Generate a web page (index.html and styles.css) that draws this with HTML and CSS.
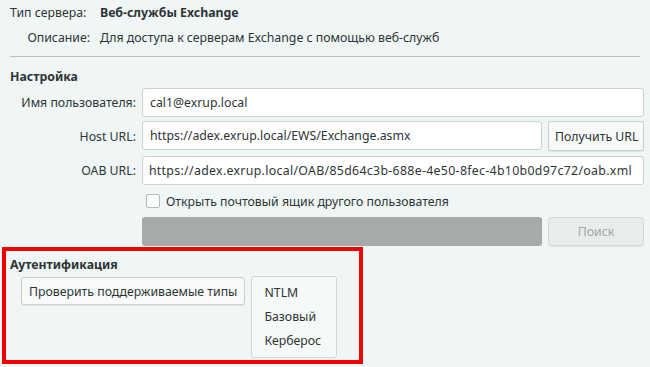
FILE: index.html
```html
<!DOCTYPE html>
<html lang="ru">
<head>
    <meta charset="UTF-8">
    <meta name="viewport" content="width=device-width, initial-scale=1.0">
    <title>Учётная запись Exchange</title>
    <link rel="stylesheet" href="styles.css">
</head>
<body>
    <div class="info">
        <span class="info-label">Тип сервера:</span>
        <span class="info-value strong">Веб-службы Exchange</span>
        <span class="info-label">Описание:</span>
        <span class="info-value">Для доступа к серверам Exchange с помощью веб-служб</span>
    </div>

    <hr class="sep">

    <h3 class="section-title">Настройка</h3>
    <div class="form">
        <label class="form-label">Имя пользователя:</label>
        <div class="field"><input class="entry" type="text" value="cal1@exrup.local"></div>

        <label class="form-label">Host URL:</label>
        <div class="field host">
            <input class="entry" type="text" value="https://adex.exrup.local/EWS/Exchange.asmx">
            <button class="btn">Получить URL</button>
        </div>

        <label class="form-label">OAB URL:</label>
        <div class="field"><div class="entry clipped"><span>https://adex.exrup.local/OAB/85d64c3b-688e-4e50-8fec-4b10b0d97c72/oab.xml</span></div></div>

        <span></span>
        <label class="check"><span class="box"></span>Открыть почтовый ящик другого пользователя</label>

        <span></span>
        <div class="field">
            <div class="progress"></div>
            <button class="btn" disabled>Поиск</button>
        </div>
    </div>

    <div class="auth">
        <h3 class="section-title">Аутентификация</h3>
        <div class="auth-row">
            <button class="btn check-btn">Проверить поддерживаемые типы</button>
            <ul class="auth-list">
                <li>NTLM</li>
                <li>Базовый</li>
                <li>Керберос</li>
            </ul>
        </div>
    </div>
</body>
</html>
```

FILE: styles.css
```css
body {
    margin: 0;
    background: #eff6f5;
    color: #2e3436;
    font-family: "Noto Sans", "Open Sans", sans-serif;
    font-size: 12.3px;
}
.info {
    display: grid;
    grid-template-columns: 90px 1fr;
    column-gap: 10px;
    row-gap: 7px;
    padding: 4px 0 0 0;
}
.info-label,
.info-value {
    line-height: 18px;
    white-space: nowrap;
}
.info-label {
    text-align: right;
}
.info-label:first-child {
    text-align: left;
    padding-left: 10px;
}
.strong {
    font-weight: bold;
}
.sep {
    border: none;
    border-top: 1px solid #b9bfbd;
    margin: 9px 10px 0 10px;
}
.section-title {
    font-size: 12.3px;
    font-weight: bold;
    margin: 0;
    padding: 12px 10px 3px 10px;
    line-height: 16px;
}
.form {
    display: grid;
    grid-template-columns: 136px minmax(0, 1fr);
    column-gap: 6px;
    row-gap: 4px;
    padding-right: 6px;
}
.form-label {
    text-align: right;
    align-self: center;
    white-space: nowrap;
}
.field {
    display: flex;
    gap: 6px;
    min-width: 0;
}
.host {
    margin-bottom: 1px;
}
.entry {
    flex: 1;
    min-width: 0;
    height: 29px;
    box-sizing: border-box;
    border: 1px solid #cbd1cf;
    border-radius: 3px;
    background: #fff;
    padding: 0 7px;
    font: inherit;
    color: #2e3436;
}
.clipped {
    display: flex;
    align-items: center;
    justify-content: flex-end;
    overflow: hidden;
    white-space: nowrap;
    padding: 0 11px 0 6px;
}
.clipped span {
    flex-shrink: 0;
    letter-spacing: 0.33px;
}
.btn {
    height: 29px;
    box-sizing: border-box;
    padding: 0 6px;
    border: 1px solid #c9cecc;
    border-radius: 3px;
    background: #f8faf9;
    box-shadow: 0 1px 0 rgba(0, 0, 0, 0.06);
    font: inherit;
    color: #2e3436;
    white-space: nowrap;
}
.field .btn {
    width: 96px;
    flex-shrink: 0;
}
.host .btn {
    height: 30px;
}
.btn:disabled {
    background: #e8ecea;
    color: #a2a7a5;
    border-color: #d4d9d7;
}
.check {
    display: flex;
    align-items: center;
    gap: 6px;
    height: 24px;
    padding-left: 4px;
}
.box {
    width: 12px;
    height: 12px;
    border: 1px solid #b5bbb9;
    border-radius: 2px;
    background: #fff;
}
.progress {
    flex: 1;
    height: 29px;
    border-radius: 3px;
    background: #a6abaa;
}
.auth {
    margin: 1px 0 0 2px;
    width: 353px;
    height: 109px;
    border: 4px solid #f00000;
}
.auth .section-title {
    padding: 6px 4px 3px 4px;
}
.auth-row {
    display: flex;
    align-items: flex-start;
    gap: 6px;
    padding-left: 15px;
}
.check-btn {
    height: 28px;
    margin-top: 1px;
    padding: 0 7px;
}
.auth-list {
    list-style: none;
    margin: 0;
    padding: 4px 0 4px 12px;
    width: 86px;
    box-sizing: border-box;
    border: 1px solid #d0d5d3;
    border-radius: 3px;
    background: #f5f9f8;
}
.auth-list li {
    line-height: 24px;
}
```
